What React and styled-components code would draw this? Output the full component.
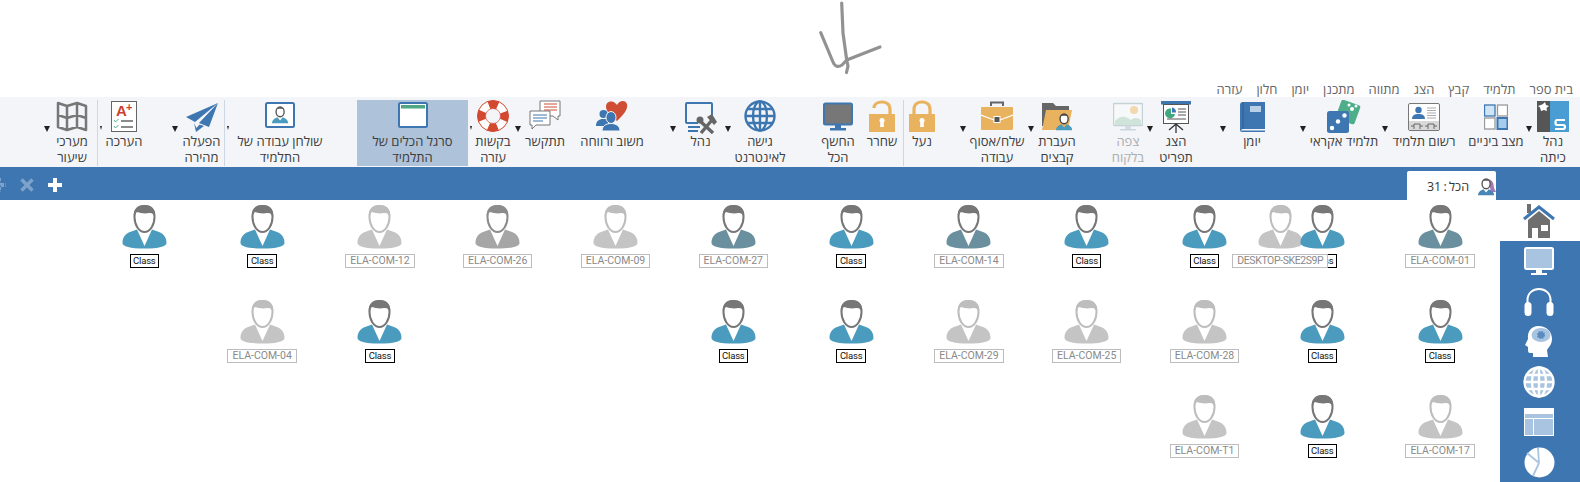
import React from 'react';
import styled, { createGlobalStyle } from 'styled-components';

const Global = createGlobalStyle`
  html, body { margin: 0; padding: 0; background: #fff; overflow: hidden; }
  body { font-family: "Open Sans", "Liberation Sans", sans-serif; }
`;
const BLUE = '#3d76b0';
const PALE = '#a9c4e0';
const GREY = '#6f6f6f';
const AMBER = '#e9b25f';

const Page = styled.div`width: 1580px; height: 482px; overflow: hidden; display: flex; flex-direction: column;`;
const TopStrip = styled.div`height: 80px; flex: none;`;
const Menu = styled.nav`
  height: 17px; flex: none; direction: rtl; display: flex; align-items: center; gap: 14px;
  padding-inline-start: 7px; font-size: 13px; color: #666; white-space: nowrap;
`;
const Ribbon = styled.div`
  height: 70px; flex: none; box-sizing: border-box; padding: 3px 7px 1px 0; background: #f3f5f8;
  direction: rtl; display: flex; align-items: stretch;
`;
const Tool = styled.button`
  all: unset; flex: none; box-sizing: border-box; width: ${p => p.$w}px; margin-inline-start: ${p => p.$mr || 0}px;
  display: flex; flex-direction: column; align-items: center; text-align: center;
  background: ${p => p.$active ? '#aec3da' : 'transparent'};
  color: ${p => p.$off ? '#adadad' : '#3c3c3c'};
  font-size: 13px; line-height: 16px; white-space: nowrap;
`;
const IconSlot = styled.span`height: 33px; display: flex; justify-content: center; align-items: flex-start; width: 100%;`;
const Caret = styled.span`
  flex: none; width: ${p => p.$tiny ? 5 : 8}px; margin-inline-start: ${p => p.$mr || 0}px;
  display: flex; justify-content: center; padding-top: 26px; box-sizing: border-box;
  &::before { content: ''; height: 0; border-style: solid; border-color: #222 transparent transparent;
    border-width: ${p => p.$tiny ? '4px 1.5px 0' : '6px 3.5px 0'}; }
`;
const Divider = styled.span`flex: none; width: 1px; background: #ccd8e4; margin-inline-start: ${p => p.$mr || 0}px;`;

const TabBar = styled.div`
  height: 33px; flex: none; background: ${BLUE}; display: flex; align-items: flex-end; justify-content: space-between;
`;
const BarActions = styled.div`display: flex; align-items: center; gap: 14px; height: 33px; margin-left: -8px; padding-top: 3px; box-sizing: border-box;`;
const Tab = styled.div`
  width: 89px; height: 29px; margin-right: 84px; background: #fff; border-radius: 2px 2px 0 0; direction: rtl;
  box-sizing: border-box; padding-top: 2px;
  display: flex; align-items: center; gap: 9px; font-size: 12.5px; word-spacing: -1px; color: #333; white-space: nowrap;
  svg { flex: none; }
`;
const Body = styled.div`flex: 1; display: flex; min-height: 0;`;
const Canvas = styled.main`
  flex: 1; direction: rtl; padding: 5px 1px 0 0; display: grid;
  grid-template-columns: repeat(12, 117.8px); grid-auto-rows: 95px; box-sizing: border-box;
`;
const Node = styled.div`
  grid-column: ${p => p.$c + 1}; grid-row: ${p => p.$r + 1}; position: relative; left: ${p => p.$shift || 0}px;
  display: flex; flex-direction: column; align-items: center; direction: ltr;
  svg { display: block; }
`;
const NodeLabel = styled.span`
  margin-top: 5px; height: 14px; box-sizing: border-box; background: #fff; position: relative;
  z-index: ${p => p.$top ? 3 : 2}; padding: 0 ${p => p.$on ? 2.5 : 4}px;
  border: 1px solid ${p => p.$on ? '#000' : '#bdbdbd'}; color: ${p => p.$on ? '#111' : '#8a8a8a'};
  font: ${p => p.$on ? '9.5px' : '10.5px'}/12px Roboto, sans-serif;
  letter-spacing: ${p => p.$on ? '-0.2px' : p.$top ? '-0.4px' : '0'}; white-space: nowrap;
`;
const Side = styled.aside`width: 80px; flex: none; display: flex; flex-direction: column;`;
const HomeBox = styled.div`height: 41px; flex: none; display: flex; justify-content: center; padding: 4px 2px 0 0; box-sizing: border-box;`;
const SidePanel = styled.div`flex: 1; background: ${BLUE}; display: grid; grid-auto-rows: 40px; justify-items: center; align-items: center; padding: 1px 2px 0 0;`;

const Svg = ({ children, w = 32, h = 32, vb }) => (
  <svg width={w} height={h} viewBox={vb || `0 0 ${w} ${h}`} fill="none">{children}</svg>
);
const Mini = ({ x, y, s = 1, body = '#4a9bbd', head = '#555' }) => (
  <g transform={`translate(${x} ${y}) scale(${s})`}>
    <ellipse cx="6" cy="3.6" rx="3" ry="3.6" fill="#fff" stroke={head} strokeWidth="1" />
    <path d="M3.2 1.6C4 -.4 8 -.4 8.8 1.6C7 1.2 5 1.2 3.2 1.6Z" fill={head} />
    <path d="M0 12C0 9.5 2 8.5 4 7.5L6 10L8 7.5C10 8.5 12 9.5 12 12Z" fill={body} />
  </g>
);

const ClassIcon = () => <Svg w={32} h={32}>
  <rect y="1" width="13" height="31" fill="#565656" />
  <rect x="13" y="1" width="19" height="31" fill="#4a9dd3" />
  <path d="M6 4L8 2L9 5L12 6L9.500 8L10 11L7 10L4 11L3 7.500L1 6L4 5Z" fill="#fff" />
  <path d="M28 20H20Q18.500 20 18.500 22.500Q18.500 25 20 25H26Q28 25 28 27T26 29H18" stroke="#fff" strokeWidth="2.2" />
</Svg>;
const GridIcon = () => <Svg w={24} h={32}>
  <rect x=".5" y="5" width="10.500" height="11" fill="#cfe4f5" stroke={BLUE} strokeWidth="1.300" />
  <rect x="13.500" y="5" width="10" height="11" fill="#fff" stroke="#999" strokeWidth="1.300" />
  <rect x=".5" y="18" width="10.500" height="11" fill="#fff" stroke="#999" strokeWidth="1.300" />
  <rect x="13.500" y="18" width="10" height="11" fill="#a6cdec" stroke={BLUE} strokeWidth="2" />
</Svg>;
const CardIcon = () => <Svg w={32} h={32}>
  <rect x=".5" y="3.500" width="31" height="27" rx="1.500" fill="#fff" stroke="#777" />
  <circle cx="10.500" cy="10" r="3.200" fill={BLUE} />
  <path d="M4 19C4 15 7 14 10.500 14S17 15 17 19Z" fill={BLUE} />
  <path d="M19 8H28M19 10.500H28M19 13H28M19 15.500H28M19 18H28" stroke="#aaa" />
  <rect x="1" y="21" width="30" height="9" fill="#d9d9d9" />
  <path d="M6 29V24H12V29M20 29V24H26V29M3 26H6M12 26H15M17 26H20M26 26H29" stroke="#666" />
</Svg>;
const DiceIcon = () => <Svg w={34} h={34}>
  <rect x="11" y="2" width="20" height="20" rx="2" transform="rotate(20 21 12)" fill="#4fae8a" />
  <circle cx="25" cy="9" r="2" fill="#fff" /><circle cx="22" cy="5" r="1.500" fill="#fff" /><circle cx="29" cy="6" r="1.500" fill="#fff" />
  <rect x="0" y="11" width="22" height="22" rx="2.500" fill={BLUE} />
  <circle cx="5" cy="28" r="2.200" fill="#fff" /><circle cx="11" cy="21.500" r="2.200" fill="#fff" /><circle cx="17.500" cy="15.500" r="2.200" fill="#fff" />
</Svg>;
const BookIcon = () => <Svg w={25} h={32}>
  <path d="M3 2H25V29H3Q1 29 1 30.500H25V32H2Q0 32 0 30V5Q0 2 3 2Z" fill={BLUE} />
  <rect x="4" y="2" width="21" height="27" fill={BLUE} />
  <rect x="10" y="6" width="11" height="6" fill="#b9cfe6" />
  <rect x="2.500" y="2" width="1" height="27" fill="#2d5f94" />
</Svg>;
const BoardIcon = () => <Svg w={30} h={34}>
  <rect x="0" y="1" width="30" height="3.500" fill={BLUE} />
  <rect x="2.500" y="4.500" width="25" height="19" fill="#fff" stroke="#555" />
  <path d="M10 8.500A5 5 0 1 0 14 14H10Z" fill="#3fa87f" /><path d="M11 7.500A5 5 0 0 1 15 12.500H11Z" fill={BLUE} />
  <path d="M17 9H25M17 12H25M17 15H25M6 19H25" stroke="#555" />
  <path d="M15 33V25M15 24L8 30M15 24L22 30" stroke="#333" strokeWidth="1.300" />
</Svg>;
const SceneIcon = () => <Svg w={30} h={32}>
  <rect x="0.500" y="3.500" width="29" height="22" rx="1" fill="#f7f8f9" stroke="#c5d2d8" strokeWidth="1.500" />
  <path d="M2 21C8 14 14 17 18 20C22 17 25 18 28 20V25H2Z" fill="#cfe3da" />
  <circle cx="21" cy="10" r="4" fill="#f3d7ae" />
  <rect x="12" y="26" width="6" height="3" fill="#d3dde3" /><rect x="7" y="29" width="16" height="1.500" fill="#cbd8de" />
</Svg>;
const FolderIcon = () => <Svg w={30} h={32}>
  <path d="M0 3H11L14 6H27V26H0Z" fill="#666" />
  <path d="M4 10H30L26 30H0Z" fill={AMBER} />
  <Mini x="14" y="14" s="1.350" head="#444" />
</Svg>;
const CaseIcon = () => <Svg w={32} h={32}>
  <path d="M10 6V2.500H22V6" stroke="#666" strokeWidth="2" />
  <rect x="0" y="7" width="32" height="23" rx="1" fill={AMBER} />
  <path d="M0 15L13 20M32 15L19 20" stroke="#fff" strokeWidth="1.200" />
  <rect x="13" y="16.500" width="6" height="6" fill="#555" stroke="#fff" />
</Svg>;
const LockIcon = ({ open }) => <Svg w={26} h={32}>
  <path d={open ? 'M21 14V9.500C21 4 17 2 13 2S5 4 5 8' : 'M5 15V9.500C5 4 9 2 13 2S21 4 21 9.500V15'} stroke={AMBER} strokeWidth="3.200" />
  <rect x="0" y="14" width="26" height="18" fill={AMBER} />
  <circle cx="13" cy="20.500" r="2.500" fill="#fff" /><path d="M11.500 21H14.500L15 27H11Z" fill="#fff" />
</Svg>;
const ScreenIcon = () => <Svg w={30} h={32}>
  <rect x="1" y="3.500" width="28" height="21" rx="1.500" fill="#777" stroke={BLUE} strokeWidth="2" />
  <rect x="12" y="25" width="6" height="3" fill={BLUE} /><rect x="7" y="28" width="16" height="2.500" fill={BLUE} />
</Svg>;
const GlobeLines = ({ color, sw = 2.400, fill = 'none' }) => <g stroke={color} strokeWidth={sw} fill="none">
  <circle cx="16" cy="16" r="14.500" fill={fill} /><ellipse cx="16" cy="16" rx="7" ry="14.500" />
  <path d="M16 1.500V30.500M1.500 16H30.500M3.500 9H28.500M3.500 23H28.500" />
</g>;
const ManageIcon = () => <Svg w={32} h={34}>
  <path d="M13 23H2Q1 23 1 22V4Q1 3 2 3H26Q27 3 27 4V15" stroke={BLUE} strokeWidth="2" />
  <path d="M3 26H15V28H3ZM3 30H13V32H3Z" fill={BLUE} />
  <path d="M15 21L28 33M27 20L16 33" stroke="#666" strokeWidth="3.400" />
  <path d="M22 17L27 14L32 22L29 25Z" fill="#666" />
  <circle cx="15" cy="20" r="3.500" fill="#666" />
</Svg>;
const HeartsIcon = () => <Svg w={32} h={32}>
  <path d="M21 21C14 15 10 11 10 6.500C10 3 13 1 16 1.500C18.500 2 20 4 21 5C22 3 24 1 27 1C30 1 32 4 31 7.500C30 12 26 16 21 21Z" fill="#cf4d35" />
  <circle cx="7.500" cy="14" r="4" fill={BLUE} /><path d="M0 26C0 21 3 19 7 19H12V26Z" fill={BLUE} />
  <ellipse cx="15" cy="17.500" rx="5" ry="6" fill={BLUE} stroke="#f3f5f8" /><path d="M6 31C6 26 10 23.500 15 23.500S24 26 24 31Z" fill={BLUE} stroke="#f3f5f8" />
</Svg>;
const ChatIcon = () => <Svg w={32} h={32}>
  <path d="M11 1H31V16H29V20L24 16H11Z" fill="#fff" stroke="#777" />
  <path d="M15 4H28M15 7H28M15 10H28" stroke="#cf4d35" />
  <path d="M1 11H21V25H7L3 29V25H1Z" fill="#fff" stroke="#777" />
  <path d="M4 15H18M4 18H18M4 21H14" stroke={BLUE} />
</Svg>;
const BuoyIcon = () => <Svg w={32} h={32}>
  <circle cx="16" cy="16" r="11.500" stroke="#fff" strokeWidth="8" />
  <circle cx="16" cy="16" r="11.500" stroke="#d2492f" strokeWidth="8" strokeDasharray="9 9.060" strokeDashoffset="4.500" />
  <circle cx="16" cy="16" r="15.500" stroke="#d2492f" strokeWidth="1" />
  <circle cx="16" cy="16" r="7.500" stroke="#d2492f" strokeWidth=".7" />
</Svg>;
const WindowIcon = () => <Svg w={30} h={32}>
  <rect x="1" y="3" width="28" height="24" rx="1.500" fill="#fff" stroke={BLUE} strokeWidth="2" />
  <rect x="3" y="5" width="24" height="3.500" fill="#4fa883" />
</Svg>;
const DeskIcon = () => <Svg w={30} h={32}>
  <rect x="1" y="3" width="28" height="24" rx="1.500" fill="#fff" stroke={BLUE} strokeWidth="2" />
  <Mini x="7" y="7" s="1.350" head="#555" body="#4a9bbd" />
</Svg>;
const PlaneIcon = () => <Svg w={32} h={32}>
  <path d="M32 3L0 17L9 22ZM32 3L13 23L23 27ZM8 23L10 32L18 26L13.500 24.500L10.500 28Z" fill={BLUE} />
</Svg>;
const GradeIcon = () => <Svg w={26} h={32}>
  <rect x=".5" y="1.500" width="25" height="30" fill="#fff" stroke="#666" />
  <text x="5" y="16" direction="ltr" fontFamily="Liberation Sans" fontWeight="700" fontSize="15" fill="#cf3f2c">A</text>
  <text x="15" y="11" direction="ltr" fontFamily="Liberation Sans" fontWeight="700" fontSize="11" fill="#cf3f2c">+</text>
  <path d="M3 20L4.500 22L7.500 19M3 26L4.500 28L7.500 25" stroke="#4fae8a" />
  <path d="M10 21H22M10 27H22" stroke="#666" strokeWidth="1.500" />
</Svg>;
const MapIcon = () => <Svg w={32} h={32}>
  <path d="M2 3L11 6L21 3L30 6V30L21 27L11 30L2 27ZM11 6V30M21 3V27M2 15L11 18L21 15L30 18" stroke="#777" strokeWidth="2.500" strokeLinejoin="round" />
</Svg>;

const Avatar = ({ body, hair }) => (
  <svg width="45" height="44" viewBox="0 0 45 44" fill="none">
    <path d="M.5 38C.5 32.500 3 29 8 27L15 24.500L22.500 41L30 24.500L37 27C42 29 44.500 32.500 44.500 38C44.500 41.500 37 43.500 22.500 43.500S.5 41.500 .5 38Z" fill={body} />
    <path d="M12.500 12C12.500 20 17 27 22.500 27S32.500 20 32.500 12C32.500 4 28 1 22.500 1S12.500 4 12.500 12Z" fill="#fff" stroke={hair} strokeWidth="2" />
    <path d="M12 13C10.500 4 16 0 22.500 0S34.500 4 33 13C32 9 30 7.500 27 8C23 9 18 8 15 7C13.500 8 12.500 10 12 13Z" fill={hair} />
  </svg>
);
const TONES = {
  on: { body: '#4a9bbd', hair: '#777' },
  dim: { body: '#6a909f', hair: '#777' },
  off: { body: '#c4c4c4', hair: '#bdbdbd' },
  dark: { body: '#a6a6a6', hair: '#8c8c8c' },
};
const NODES = [
  ['ELA-COM-01', 0, 0, 'dim'], ['DESKTOP-SKE2S9P', 1, 0, 'off', -42], ['Class', 1, 0, 'on'], ['Class', 2, 0, 'on'], ['Class', 3, 0, 'on'],
  ['ELA-COM-14', 4, 0, 'dim'], ['Class', 5, 0, 'on'], ['ELA-COM-27', 6, 0, 'dim'], ['ELA-COM-09', 7, 0, 'off'], ['ELA-COM-26', 8, 0, 'dark'],
  ['ELA-COM-12', 9, 0, 'off'], ['Class', 10, 0, 'on'], ['Class', 11, 0, 'on'],
  ['Class', 0, 1, 'on'], ['Class', 1, 1, 'on'], ['ELA-COM-28', 2, 1, 'off'], ['ELA-COM-25', 3, 1, 'off'], ['ELA-COM-29', 4, 1, 'off'],
  ['Class', 5, 1, 'on'], ['Class', 6, 1, 'on'], ['Class', 9, 1, 'on'], ['ELA-COM-04', 10, 1, 'off'],
  ['ELA-COM-17', 0, 2, 'off'], ['Class', 1, 2, 'on'], ['ELA-COM-T1', 2, 2, 'off'],
];
const MENU = ['בית ספר', 'תלמיד', 'קבץ', 'הצג', 'מתווה', 'מתכנן', 'יומן', 'חלון', 'עזרה'];
const TOOLS = [
  { l: ['נהל', 'כיתה'], I: ClassIcon, w: 40, caret: {} },
  { l: ['מצב ביניים'], I: GridIcon, w: 58 },
  { l: ['רשום תלמיד'], I: CardIcon, w: 70, mr: 8, caret: {} },
  { l: ['תלמיד אקראי'], I: DiceIcon, w: 74, caret: {} },
  { l: ['יומן'], I: BookIcon, w: 50, mr: 22, caret: {} },
  { l: ['הצג', 'תפריט'], I: BoardIcon, w: 44, mr: 21, caret: {} },
  { l: ['צפה', 'בלקוח'], I: SceneIcon, w: 36, off: true },
  { l: ['העברת', 'קבצים'], I: FolderIcon, w: 44, mr: 31, caret: {} },
  { l: ['שלח/אסוף', 'עבודה'], I: CaseIcon, w: 60, caret: {} },
  { l: ['נעל'], I: () => <LockIcon />, w: 36, mr: 19, divider: true },
  { l: ['שחרר'], I: () => <LockIcon open />, w: 40, mr: 1 },
  { l: ['החשף', 'הכל'], I: ScreenIcon, w: 40, mr: 4 },
  { l: ['גישה', 'לאינטרנט'], I: () => <Svg><GlobeLines color={BLUE} /></Svg>, w: 56, mr: 30, caret: {} },
  { l: ['נהל'], I: ManageIcon, w: 47, caret: {} },
  { l: ['משוב ורווחה'], I: HeartsIcon, w: 70, mr: 22 },
  { l: ['תתקשר'], I: ChatIcon, w: 46, mr: 9, caret: {} },
  { l: ['בקשות', 'עזרה'], I: BuoyIcon, w: 40, mr: 1, caret: { tiny: true } },
  { l: ['סרגל הכלים של', 'התלמיד'], I: WindowIcon, w: 111, active: true },
  { l: ['שולחן עבודה של', 'התלמיד'], I: DeskIcon, w: 100, mr: 27, caret: { tiny: true }, divider: true },
  { l: ['הפעלה', 'מהירה'], I: PlaneIcon, w: 45, caret: {} },
  { l: ['הערכה'], I: GradeIcon, w: 42, mr: 26, caret: { tiny: true }, divider: true },
  { l: ['מערכי', 'שיעור'], I: MapIcon, w: 42, mr: 4, caret: {} },
];

export default function App() {
  return (
    <Page>
      <Global />
      <TopStrip>
        <svg width="1580" height="80" viewBox="0 0 1580 80" fill="none">
          <filter id="soft"><feGaussianBlur stdDeviation=".6" /></filter>
          <path filter="url(#soft)" d="M841.700 3L843 33L846.700 60L848 66L846.500 72.500M820.700 32.700L833 62Q836 69 842 65L846.700 60L880 47" stroke="#808080" strokeWidth="3.200" strokeLinecap="round" strokeLinejoin="round" opacity=".85" />
        </svg>
      </TopStrip>
      <Menu>{MENU.map(m => <span key={m}>{m}</span>)}</Menu>
      <Ribbon>
        {TOOLS.map((t, i) => (
          <React.Fragment key={i}>
            <Tool $w={t.w} $mr={t.mr} $off={t.off} $active={t.active}>
              <IconSlot><t.I /></IconSlot>
              {t.l.map(x => <span key={x}>{x}</span>)}
            </Tool>
            {t.caret && <Caret $tiny={t.caret.tiny} />}
            {t.divider && <Divider />}
          </React.Fragment>
        ))}
      </Ribbon>
      <TabBar>
        <BarActions>
          <Svg w={14} h={14}><path d="M7 0V14M0 7H14" stroke="#7ea3cb" strokeWidth="4" strokeDasharray="3 1.500" /></Svg>
          <Svg w={14} h={14}><path d="M1.500 1.500L12.500 12.500M12.500 1.500L1.500 12.500" stroke="#7ea3cb" strokeWidth="3.500" /></Svg>
          <Svg w={14} h={14}><path d="M7 0V14M0 7H14" stroke="#fff" strokeWidth="4" /></Svg>
        </BarActions>
        <Tab>
          <Svg w={18} h={18}>
            <path d="M10 1Q16 2 16 10L18 14H13Z" fill="#8a4a9a" opacity=".75" />
            <Mini x="0" y="1" s="1.350" head="#555" body="#4a85b8" />
          </Svg>
          <span>הכל : 31</span>
        </Tab>
      </TabBar>
      <Body>
        <Canvas>
          {NODES.map(([label, c, r, tone, shift], i) => (
            <Node key={i} $c={c} $r={r} $shift={shift}>
              <Avatar {...TONES[tone]} />
              <NodeLabel $on={tone === 'on'} $top={!!shift}>{label}</NodeLabel>
            </Node>
          ))}
        </Canvas>
        <Side>
          <HomeBox>
            <Svg w={32} h={34}>
              <rect x="4" y="0" width="4" height="9" fill={GREY} />
              <path d="M5 16L16 7L27 16V34H5Z" fill={GREY} />
              <rect x="9" y="24" width="6" height="10" fill="#fff" /><rect x="18" y="21" width="7" height="6" fill="#fff" />
              <path d="M1 15L16 3L31 15" stroke={BLUE} strokeWidth="3" />
            </Svg>
          </HomeBox>
          <SidePanel>
            <Svg w={30} h={30}>
              <rect x="1" y="1" width="28" height="21" rx="1.500" fill={PALE} stroke="#fff" strokeWidth="2" />
              <rect x="12" y="23" width="6" height="3" fill="#fff" /><rect x="7" y="26" width="16" height="2" fill="#fff" />
            </Svg>
            <Svg w={30} h={30}>
              <path d="M3.500 17V13C3.500 6 9 2 15 2S26.500 6 26.500 13V17" stroke="#fff" strokeWidth="2" />
              <rect x="0.500" y="15" width="7" height="14" rx="3.500" fill="#fff" /><rect x="22.500" y="15" width="7" height="14" rx="3.500" fill="#fff" />
            </Svg>
            <Svg w={30} h={32}>
              <path d="M14 0C23 0 28 6 28 13C28 18 25 21 23 24L24 31H9V27H6C4 27 4 25 4 23V21L1 19L4 13C3 5 8 0 14 0Z" fill="#fff" />
              <ellipse cx="17" cy="9" rx="9.500" ry="7" fill={PALE} />
              <circle cx="17" cy="9" r="3.200" fill="#5b8cc0" stroke="#5b8cc0" strokeDasharray="1.500 1" strokeWidth="1.800" />
            </Svg>
            <Svg><GlobeLines color="#fff" fill={PALE} /></Svg>
            <Svg w={30} h={28}>
              <rect width="30" height="28" fill="#fff" /><rect x="1" y="6" width="28" height="4" fill={PALE} />
              <rect x="1" y="11" width="8" height="16" fill={PALE} /><rect x="10" y="11" width="19" height="16" fill={PALE} />
            </Svg>
            <Svg w={31} h={31}>
              <circle cx="15.500" cy="15.500" r="15" fill="#fff" />
              <path d="M3 6L15 16M14 1L15 16L9 29" stroke={PALE} strokeWidth="1.800" />
            </Svg>
          </SidePanel>
        </Side>
      </Body>
    </Page>
  );
}
